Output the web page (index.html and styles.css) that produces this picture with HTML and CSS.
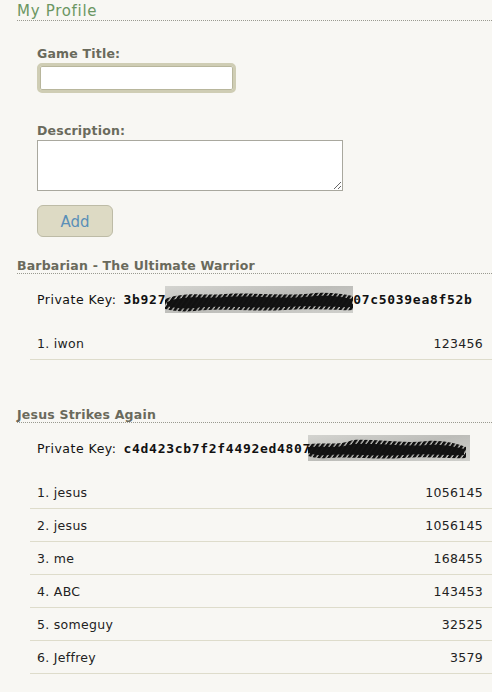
FILE: index.html
```html
<!DOCTYPE html>
<html>
<head>
<meta charset="utf-8">
<link rel="stylesheet" href="styles.css">
</head>
<body>
<div class="page">
  <h1 class="page-title">My Profile</h1>
  <form class="game-form">
    <label class="field-label" for="title">Game Title:</label>
    <input class="title-input" id="title" type="text">
    <label class="field-label desc-label" for="desc">Description:</label>
    <textarea class="desc-input" id="desc"></textarea>
    <button class="add-btn" type="button">Add</button>
  </form>

  <section class="game">
    <h2 class="game-title">Barbarian - The Ultimate Warrior</h2>
    <div class="key-row">
      <span class="key-label">Private Key:</span>
      <span class="key-value">3b927<span class="redact r1"><svg viewBox="0 0 188 27" preserveAspectRatio="none"><defs><pattern id="h1" patternUnits="userSpaceOnUse" width="5" height="27" patternTransform="skewX(-35)"><rect x="0" y="0" width="3.4" height="27" fill="#111"/></pattern></defs><path class="band" d="M2 16 C20 8 40 13 60 11 C90 9 120 14 150 10 C165 9 178 11 187 13 L187 21 C170 22 150 19 120 21 C90 23 60 19 30 22 C18 23 8 22 2 20 Z"/><path class="hatch" fill="url(#h1)" d="M0 13 C20 5 40 10 60 8 C90 6 120 11 150 7 C165 6 178 8 188 10 L188 24 C170 25 150 22 120 24 C90 26 60 22 30 25 C18 26 8 25 0 23 Z"/></svg></span>07c5039ea8f52b</span>
    </div>
    <ul class="scores">
      <li class="score"><span>1. iwon</span><span>123456</span></li>
    </ul>
  </section>

  <section class="game">
    <h2 class="game-title">Jesus Strikes Again</h2>
    <div class="key-row">
      <span class="key-label">Private Key:</span>
      <span class="key-value">c4d423cb7f2f4492ed4807<span class="redact r2"><svg viewBox="0 0 162 26" preserveAspectRatio="none"><defs><pattern id="h2" patternUnits="userSpaceOnUse" width="5" height="26" patternTransform="skewX(-35)"><rect x="0" y="0" width="3.4" height="26" fill="#111"/></pattern></defs><path class="band" d="M0 12 C15 10 30 14 45 9 C70 8 95 12 120 10 C135 9 148 12 156 14 L156 20 C140 21 120 18 95 20 C70 22 40 18 20 20 C10 21 4 19 0 18 Z"/><path class="hatch" fill="url(#h2)" d="M0 9 C15 7 30 11 45 5 C70 4 95 9 120 6 C135 5 150 9 158 12 L158 23 C140 24 120 21 95 23 C70 25 40 21 20 23 C10 24 4 22 0 21 Z"/></svg></span></span>
    </div>
    <ul class="scores">
      <li class="score"><span>1. jesus</span><span>1056145</span></li>
      <li class="score"><span>2. jesus</span><span>1056145</span></li>
      <li class="score"><span>3. me</span><span>168455</span></li>
      <li class="score"><span>4. ABC</span><span>143453</span></li>
      <li class="score"><span>5. someguy</span><span>32525</span></li>
      <li class="score"><span>6. Jeffrey</span><span>3579</span></li>
    </ul>
  </section>
</div>
</body>
</html>
```
FILE: styles.css
```css
html, body {
  margin: 0;
  padding: 0;
  background: #f8f7f3;
}
body {
  font-family: "DejaVu Sans", Verdana, sans-serif;
  font-size: 12.5px;
  color: #222;
}
.page {
  padding-left: 17px;
}
.page-title {
  margin: 0;
  padding-top: 2px;
  font-size: 15px;
  letter-spacing: 0.7px;
  line-height: 18px;
  font-weight: normal;
  color: #6b9662;
  border-bottom: 1px dotted #9a9a90;
}
.game-form {
  display: flex;
  flex-direction: column;
  align-items: flex-start;
  padding-left: 20px;
  margin: 0;
}
.field-label {
  display: block;
  margin-top: 25px;
  font-weight: bold;
  font-size: 12.5px;
  line-height: 15px;
  color: #6a6a5c;
  letter-spacing: 0.2px;
}
.desc-label {
  margin-top: 30px;
}
.title-input {
  box-sizing: border-box;
  margin: 2px 0 0;
  width: 199px;
  height: 30px;
  border: 3px solid #cfcdb4;
  border-radius: 5px;
  box-shadow: inset 0 0 0 1px #b8b69c;
  background: #fff;
}
.desc-input {
  display: block;
  box-sizing: border-box;
  margin: 2px 0 0;
  width: 306px;
  height: 51px;
  border: 1px solid #a9a89e;
  background: #fff;
  resize: both;
}
.add-btn {
  margin-top: 14px;
  width: 76px;
  height: 32px;
  background: #dddac4;
  border: 1px solid #bdbba6;
  border-radius: 6px;
  font-family: "DejaVu Sans", Verdana, sans-serif;
  font-size: 15px;
  color: #5a8fb8;
  padding: 1px 0 0;
}
.game {
  margin-top: 20px;
}
.game + .game {
  margin-top: 46px;
}
.game-title {
  margin: 0;
  font-size: 12.5px;
  line-height: 15px;
  padding-top: 1px;
  font-weight: bold;
  color: #6a6a5c;
  letter-spacing: 0.2px;
  border-bottom: 1px dotted #9a9a90;
}
.key-row {
  display: flex;
  align-items: center;
  height: 26px;
  margin-top: 12px;
  padding-left: 20px;
  white-space: nowrap;
}
.key-label {
  color: #111;
  margin-right: 7px;
  letter-spacing: 0.5px;
}
.key-value {
  display: flex;
  align-items: center;
  font-family: "DejaVu Sans Mono", "Liberation Mono", monospace;
  font-weight: bold;
  font-size: 13px;
  letter-spacing: 0.7px;
  color: #111;
}
.redact {
  display: block;
  background: linear-gradient(170deg, #d4d4d0 0%, #bdbdb9 50%, #d0d0cc 100%);
}
.redact svg {
  display: block;
  width: 100%;
  height: 100%;
}
.redact .band {
  fill: #151515;
}
.r1 {
  width: 188px;
  height: 27px;
  margin-left: -1px;
}
.r2 {
  width: 162px;
  height: 26px;
  margin-left: -3px;
}
.scores {
  list-style: none;
  margin: 15px 0 0 13px;
  padding: 0;
}
.score {
  display: flex;
  justify-content: space-between;
  padding: 8px 9px 7px 7px;
  line-height: 17px;
  border-bottom: 1px solid #dedccb;
  color: #222;
  letter-spacing: 0.3px;
}
```
